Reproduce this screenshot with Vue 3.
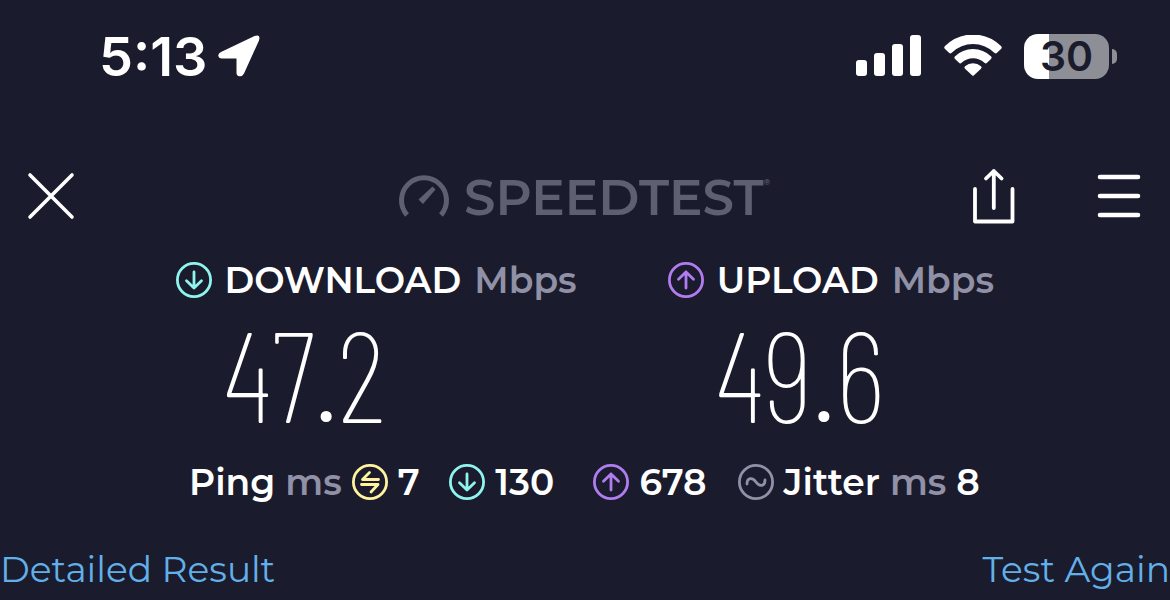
<script setup>
const results = [
  { id: 'download', label: 'DOWNLOAD', value: '47.2', icon: 'down' },
  { id: 'upload', label: 'UPLOAD', value: '49.6', icon: 'up' },
]
</script>

<template>
  <div class="screen">
    <header class="status">
      <div class="clock">
        <time>5:13</time>
        <svg width="42" height="42" viewBox="0 0 42 42" aria-hidden="true">
          <path d="M3 17 36 1.200Q43-1.500 41 5.500L26 38.500Q24.500 41.500 21.500 41.200Q18.500 41 18.500 38V23.500H4Q.5 23.300 .3 20.500Q.2 18.500 3 17Z" fill="#fff" />
        </svg>
      </div>
      <div class="signals">
        <svg class="bars" width="66" height="42" viewBox="0 0 66 42" fill="#fff" aria-hidden="true">
          <rect x="0" y="25" width="11" height="16" rx="3" />
          <rect x="18" y="18" width="11" height="23" rx="3" />
          <rect x="36" y="9" width="11" height="32" rx="3" />
          <rect x="54" y="0" width="11" height="41" rx="3" />
        </svg>
        <svg class="wifi" width="58" height="42" viewBox="0 1 58 42" fill="#fff" aria-hidden="true">
          <path d="M1 12Q-.5 13.500 1 15L5 18.800Q6.300 20 7.700 18.700Q17 10 29 10T50.300 18.700Q51.700 20 53 18.800L57 15Q58.500 13.500 57 12Q45 .5 29 .5T1 12Z" />
          <path d="M10.800 22.500Q9.700 23.700 11 25L15 28.800Q16.200 30 17.600 28.700Q22.500 24.200 29 24.200T40.400 28.700Q41.800 30 43 28.800L47 25Q48.300 23.700 47.200 22.500Q39.500 15 29 15T10.800 22.500Z" />
          <path d="M21 32.200Q19.700 33.500 21 34.700L28 41.200Q29 42.200 30 41.200L37 34.700Q38.300 33.500 37 32.200Q33.500 29.200 29 29.200T21 32.200Z" />
        </svg>
        <div class="battery">
          <span class="charge">30</span>
          <span class="tip"></span>
        </div>
      </div>
    </header>

    <nav class="toolbar">
      <button type="button" class="close" aria-label="Close">
        <svg width="48" height="48" viewBox="0 0 48 48" stroke="#fff" stroke-width="3.600" stroke-linecap="round">
          <path d="M3 3 45 45M45 3 3 45" />
        </svg>
      </button>
      <div class="brand">
        <svg width="52" height="44" viewBox="0 0 52 44" aria-hidden="true">
          <path d="M9 41A22.500 22.500 0 1 1 43 41" fill="none" stroke="#5f5f72" stroke-width="5" />
          <path d="M34.500 12.500 37.500 15.500 25 30 20.500 25.500Z" fill="#5f5f72" />
        </svg>
        <span class="name">SPEEDTEST</span><span class="mark">®</span>
      </div>
      <div class="actions">
        <button type="button" aria-label="Share">
          <svg width="42" height="56" viewBox="0 0 42 56" fill="none" stroke="#fff" stroke-width="3.800" stroke-linecap="round" stroke-linejoin="round">
            <path d="M2 21V53.500H39.500V21M20.800 40V3M13 10.500 20.800 3 28.600 10.500" />
          </svg>
        </button>
        <button type="button" aria-label="Menu">
          <svg width="44" height="44" viewBox="0 0 44 44" stroke="#fff" stroke-width="4.600" stroke-linecap="round">
            <path d="M3 3H41M3 22H41M3 41H41" />
          </svg>
        </button>
      </div>
    </nav>

    <main>
      <section class="results">
        <article v-for="r in results" :key="r.id">
          <h2>
            <svg class="icon" :class="r.icon" viewBox="0 0 36 36" aria-hidden="true">
              <circle cx="18" cy="18" r="16.600" />
              <path v-if="r.icon === 'down'" d="M18 10V26M10.500 18.800 18 26 25.500 18.800" />
              <path v-else d="M18 26V10M10.500 17.200 18 10 25.500 17.200" />
            </svg>
            <span>{{ r.label }}</span>
            <span class="unit">Mbps</span>
          </h2>
          <p class="value">{{ r.value }}</p>
        </article>
      </section>

      <section class="latency">
        <div class="item">
          <span>Ping</span><span class="unit">ms</span>
          <svg class="icon idle" viewBox="0 0 36 36" aria-hidden="true">
            <circle cx="18" cy="18" r="16.600" />
            <path d="M26.500 15.500H10.500L17.500 8.500M9.500 20.500H26L19 28" />
          </svg>
          <span>7</span>
        </div>
        <div class="item">
          <svg class="icon down" viewBox="0 0 36 36" aria-hidden="true">
            <circle cx="18" cy="18" r="16.600" />
            <path d="M18 10V26M10.500 18.800 18 26 25.500 18.800" />
          </svg>
          <span>130</span>
        </div>
        <div class="item">
          <svg class="icon up" viewBox="0 0 36 36" aria-hidden="true">
            <circle cx="18" cy="18" r="16.600" />
            <path d="M18 26V10M10.500 17.200 18 10 25.500 17.200" />
          </svg>
          <span>678</span>
        </div>
        <div class="item">
          <svg class="icon jitter" viewBox="0 0 36 36" aria-hidden="true">
            <circle cx="18" cy="18" r="16.600" />
            <path d="M9 20C9 13.500 14.500 13 18 18S27 22.500 27 16" />
          </svg>
          <span>Jitter</span><span class="unit">ms</span><span>8</span>
        </div>
      </section>
    </main>

    <footer class="links">
      <a href="#details">Detailed Result</a>
      <a href="#again">Test Again</a>
    </footer>
  </div>
</template>

<style>
body {
  background: #1a1b2c;
}
</style>

<style scoped>
.screen {
  box-sizing: border-box;
  min-height: 100vh;
  background: #1a1b2c;
  color: #fff;
  font-family: Montserrat, Inter, sans-serif;
}
.status {
  display: flex;
  align-items: center;
  justify-content: space-between;
  height: 112px;
  padding: 0 53px 0 99px;
}
.clock,
.signals {
  display: flex;
  align-items: center;
}
.clock {
  gap: 11px;
  font: 600 54px/64px Inter, sans-serif;
}
.clock time {
  padding-top: 2px;
}
.signals {
  gap: 22px;
}
.battery {
  display: flex;
  align-items: center;
  gap: 3px;
}
.charge {
  width: 85px;
  border-radius: 14px;
  background: linear-gradient(to right, #fff 30%, #8e8e96 30%);
  color: #1a1b2c;
  font: 600 41px/45px Inter, sans-serif;
  text-align: center;
}
.tip {
  width: 5px;
  height: 15px;
  border-radius: 0 6px 6px 0;
  background: #8e8e96;
}
.toolbar {
  display: grid;
  grid-template-columns: 1fr auto 1fr;
  align-items: center;
  height: 112px;
  margin-top: 28px;
  padding: 0 29px 0 27px;
}
button {
  display: block;
  padding: 0;
  border: 0;
  background: none;
}
button svg {
  display: block;
}
.close {
  justify-self: start;
}
.brand {
  display: flex;
  align-items: center;
  color: #5f5f72;
}
.name {
  margin-left: 14px;
  padding-top: 4px;
  font-size: 50px;
  font-weight: 600;
  line-height: 56px;
}
.mark {
  align-self: flex-start;
  font-size: 8px;
  font-weight: 600;
  line-height: 32px;
}
.actions {
  display: flex;
  align-items: center;
  justify-content: flex-end;
  gap: 82px;
}
.results {
  display: grid;
  grid-template-columns: 492fr 502fr;
  padding-left: 15%;
}
h2,
.item {
  display: flex;
  align-items: center;
  margin: 0;
  font-size: 36px;
  font-weight: 600;
}
h2 {
  gap: 13px;
  height: 56px;
}
.unit {
  color: #9090a6;
}
.value {
  margin: 0 0 12px;
  padding-left: 48px;
  font: 200 128px/128px "Barlow Condensed", "Roboto Condensed", Roboto, sans-serif;
  font-kerning: none;
}
.icon {
  flex: none;
  width: 36px;
  height: 36px;
  fill: none;
  stroke: currentColor;
  stroke-width: 2.800;
  stroke-linecap: round;
  stroke-linejoin: round;
}
.down {
  color: #8ff4ee;
}
.up {
  color: #b07cf0;
}
.idle {
  color: #fff3a0;
}
.jitter {
  color: #9090a6;
}
.latency {
  display: grid;
  grid-template-columns: 260fr 144fr 144fr 432fr;
  height: 68px;
  padding-left: 189px;
}
.item {
  gap: 10px;
}
.links {
  display: flex;
  justify-content: space-between;
  padding: 29px 0 6px;
}
a {
  color: #62b0ea;
  font-size: 36px;
  font-weight: 400;
  line-height: 48px;
  text-decoration: none;
}
</style>
